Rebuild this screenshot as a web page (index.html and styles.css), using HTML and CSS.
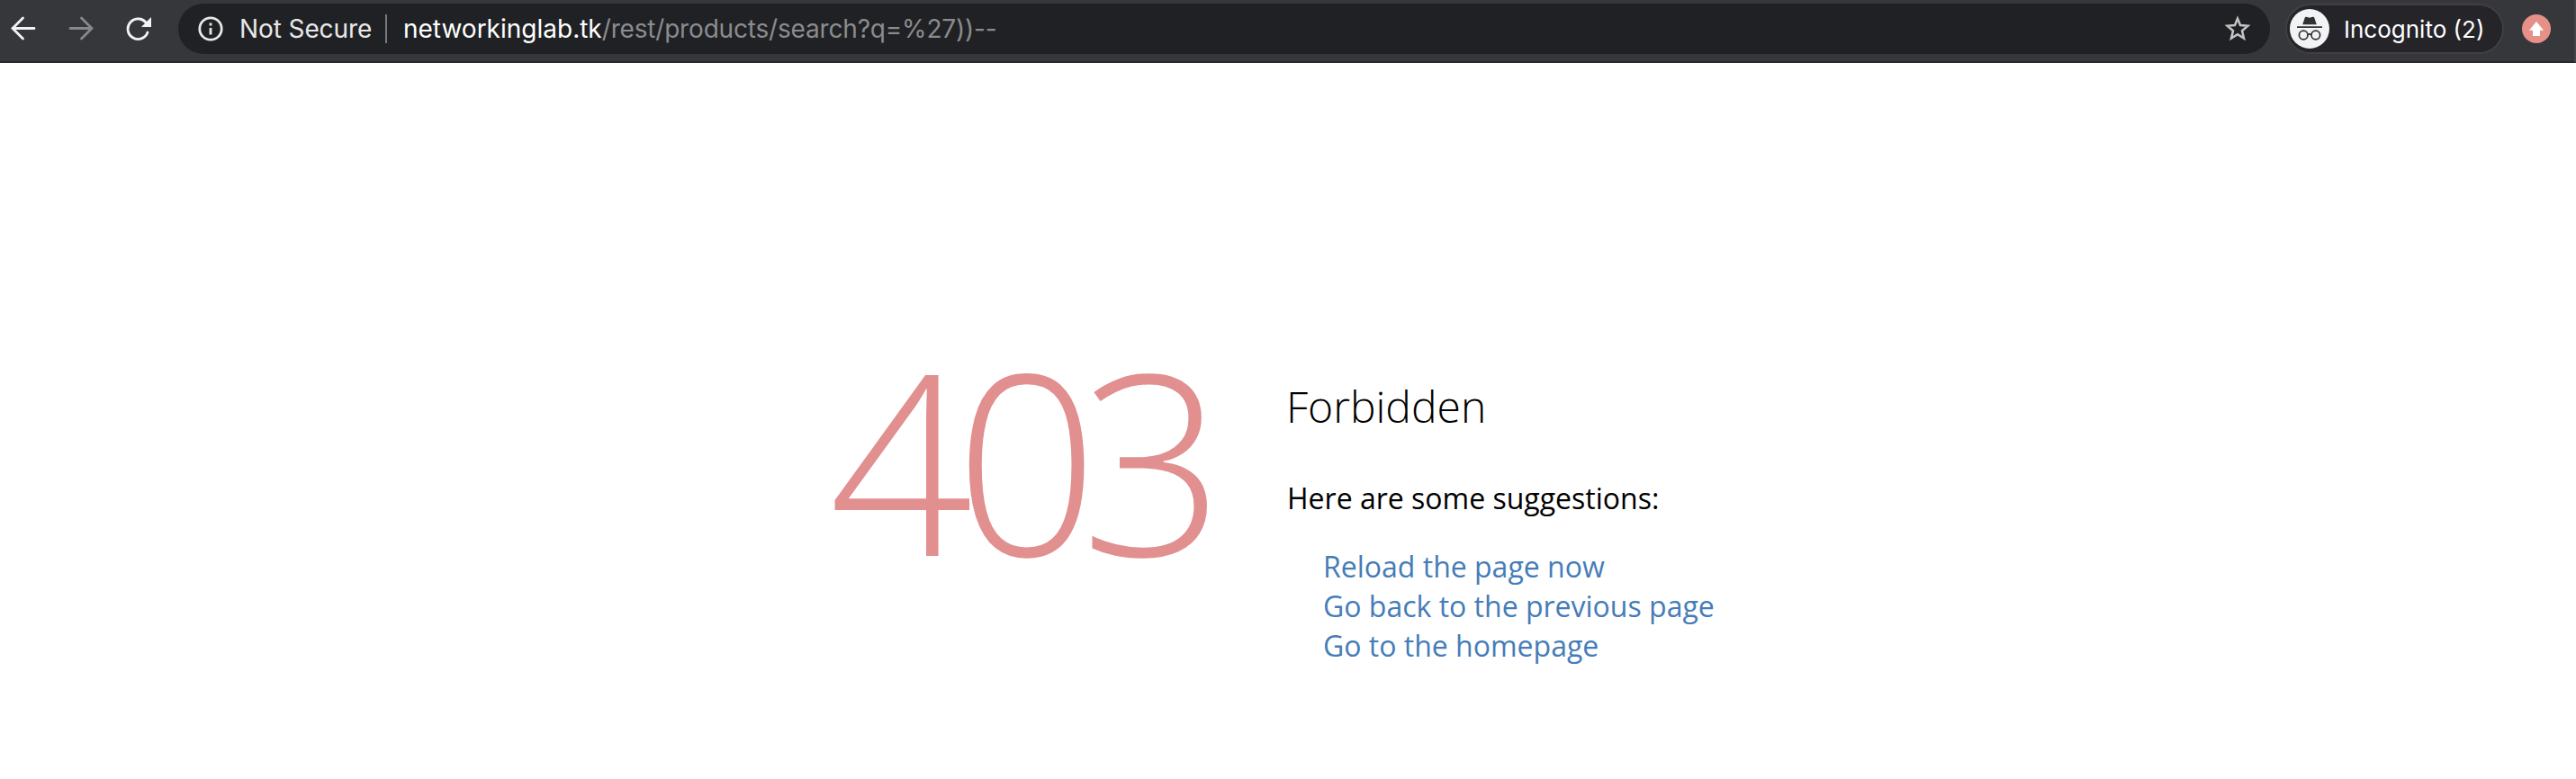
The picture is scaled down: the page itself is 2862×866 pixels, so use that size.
FILE: index.html
```html
<!DOCTYPE html>
<html lang="en">
<head>
<meta charset="utf-8">
<title>403 Forbidden</title>
<link rel="stylesheet" href="styles.css">
</head>
<body>
<header class="toolbar">
  <nav class="nav">
    <svg class="nav-icon" width="28" height="28" viewBox="0 0 28 28"><path d="M14.5 3 3 14.5 14.5 26M3 14.5H27" transform="translate(-1 -1)"/></svg>
    <svg class="nav-icon nav-icon-off" width="28" height="28" viewBox="0 0 28 28"><path d="M14.5 2 26 13.5 14.5 25M26 13.5H2"/></svg>
    <svg class="nav-icon" width="28" height="28" viewBox="0 0 28 28"><path d="M22.9 8.2A11.3 11.3 0 1 0 24 18"/><path class="solid" d="M28 1V12H17Z"/></svg>
  </nav>
  <div class="omnibox">
    <svg class="info" width="28" height="28" viewBox="0 0 28 28"><circle cx="14" cy="14" r="12.2"/><path d="M14 13v7.4M14 7.4v3"/></svg>
    <span class="security">Not Secure</span>
    <span class="divider"></span>
    <span class="url"><span class="host">networkinglab.tk</span><span class="path">/rest/products/search?q=%27))--</span></span>
    <svg class="star" width="30" height="30" viewBox="0 0 30 30"><path d="M15 3.6 18 11 26.4 11.8 20 17.2 22 25.6 15 21.2 8 25.6 10 17.2 3.6 11.8 12 11Z"/></svg>
  </div>
  <div class="chip">
    <svg class="avatar" width="44" height="44" viewBox="0 0 44 44"><circle cx="22" cy="22" r="22" fill="#f1f3f4"/><path fill="#303134" d="M14.2 17.3 16.8 9.6Q17.2 8.4 18.4 8.8L22 9.7 25.6 8.8Q26.8 8.4 27.2 9.6L29.8 17.3ZM8 19.2H36V21H8Z"/><g fill="none" stroke="#303134" stroke-width="1.7"><circle cx="15.2" cy="29" r="4.8"/><circle cx="28.8" cy="29" r="4.8"/><path d="M20 28.6Q22 27 24 28.6"/></g></svg>
    <span class="chip-label">Incognito (2)</span>
  </div>
  <svg class="update" width="32" height="32" viewBox="0 0 32 32"><circle cx="16" cy="16" r="16" fill="#e69188"/><path fill="#fff" d="M16 8 24 17.8H20V24H12V17.8H8Z"/></svg>
</header>
<main class="error">
  <div class="code">403</div>
  <section class="details">
    <h1 class="title">Forbidden</h1>
    <p class="lead">Here are some suggestions:</p>
    <ul class="links">
      <li><a href="#">Reload the page now</a></li>
      <li><a href="#">Go back to the previous page</a></li>
      <li><a href="#">Go to the homepage</a></li>
    </ul>
  </section>
</main>
</body>
</html>
```
FILE: styles.css
```css
* { box-sizing: border-box; }
body { margin: 0; background: #fff; color: #000; font-family: "Open Sans", sans-serif; overflow: hidden; }

.toolbar { display: flex; height: 70px; padding: 4px 26px 0 12px; background: #36373b; border-bottom: 2px solid #29292b; border-right: 2px solid #45464a; font: 28px/56px Inter, sans-serif; white-space: nowrap; }
.nav { display: flex; flex: none; gap: 36px; width: 186px; padding-top: 14px; }
.nav-icon { fill: none; stroke: #f1f3f4; stroke-width: 2.8; stroke-linecap: round; flex: none; }
.nav-icon-off { stroke: #87888a; }
.nav-icon .solid { fill: #f1f3f4; stroke: none; }
.omnibox { display: flex; flex: none; align-items: center; width: 2324px; height: 56px; padding: 0 21px 0 22px; border-radius: 28px; background: #202124; }
.info { margin-right: 18px; fill: none; stroke: #e8e8e8; stroke-width: 2.8; }
.security { width: 162px; color: #e8e8e8; letter-spacing: -0.1px; }
.divider { width: 2px; height: 32px; margin-right: 18px; background: #77787a; }
.url { flex: 1; }
.host { color: #fff; }
.path { color: #8b8c8e; letter-spacing: -0.18px; }
.star { fill: none; stroke: #c4c4c4; stroke-width: 2.5; }
.chip { display: flex; flex: none; align-items: center; width: 243px; height: 56px; margin-left: 17px; padding-left: 3px; border: 2px solid #3f3f44; border-radius: 28px; background: #242429; color: #fff; }
.avatar { flex: none; margin-right: 16px; }
.chip-label { padding-top: 1px; font-size: 26px; }
.update { flex: none; margin: 12px 0 0 20px; }

.error { display: flex; padding: 294px 0 0 921px; }
.code { width: 509px; padding-top: 6px; color: #e18f8f; font-size: 280px; font-weight: 300; line-height: 280px; letter-spacing: -20px; }
.details { padding-top: 54px; font-size: 32px; line-height: 44px; }
.title { margin: 0 0 0 -1px; font-size: 48px; font-weight: 300; line-height: 68px; }
.lead { margin: 46px 0 32px; }
.links { margin: 0; padding: 0 0 0 40px; list-style: none; }
.links a { color: #457cb8; text-decoration: none; }
```
